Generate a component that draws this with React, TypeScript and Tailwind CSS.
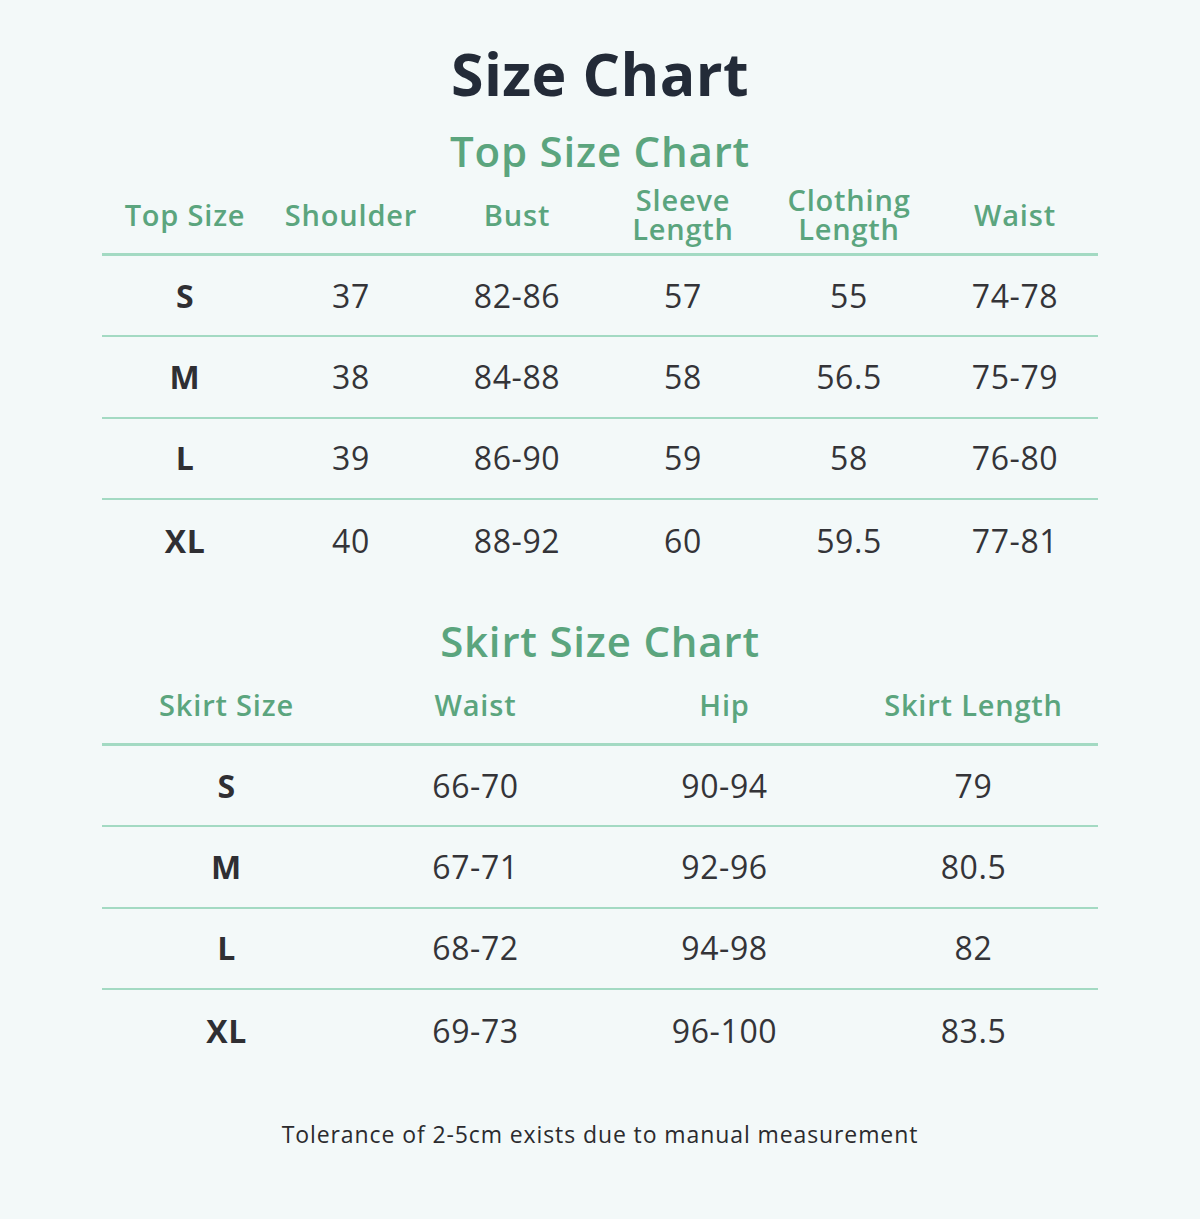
import React from 'react';

const FONT = { fontFamily: '"Open Sans", "Noto Sans", Arial, sans-serif' };

interface Table {
  title: string;
  headers: string[][];
  rows: string[][];
}

const topChart: Table = {
  title: 'Top Size Chart',
  headers: [['Top Size'], ['Shoulder'], ['Bust'], ['Sleeve', 'Length'], ['Clothing', 'Length'], ['Waist']],
  rows: [
    ['S', '37', '82-86', '57', '55', '74-78'],
    ['M', '38', '84-88', '58', '56.5', '75-79'],
    ['L', '39', '86-90', '59', '58', '76-80'],
    ['XL', '40', '88-92', '60', '59.5', '77-81'],
  ],
};

const skirtChart: Table = {
  title: 'Skirt Size Chart',
  headers: [['Skirt Size'], ['Waist'], ['Hip'], ['Skirt Length']],
  rows: [
    ['S', '66-70', '90-94', '79'],
    ['M', '67-71', '92-96', '80.5'],
    ['L', '68-72', '94-98', '82'],
    ['XL', '69-73', '96-100', '83.5'],
  ],
};

const SizeTable: React.FC<{ table: Table; cols: string }> = ({ table, cols }) => (
  <div className="w-[996px]">
    <h2 className="text-center text-[42px] leading-[52px] font-semibold text-[#5ba57e] tracking-[0.8px]">
      {table.title}
    </h2>
    {/* header */}
    <div className={`grid ${cols} h-[79px] items-center border-b-[3px] border-[#a3dac3]`}>
      {table.headers.map((h, i) => (
        <div
          key={i}
          className="pb-[2px] text-center text-[29px] leading-[29px] font-semibold text-[#5ba57e] tracking-[0.8px]"
        >
          {h.map((line) => (
            <div key={line}>{line}</div>
          ))}
        </div>
      ))}
    </div>
    {table.rows.map((row, r) => (
      <div
        key={r}
        className={`grid ${cols} h-[81.3px] items-center ${r < table.rows.length - 1 ? 'border-b-2 border-[#a3dac3]' : ''}`}
      >
        {row.map((cell, c) => (
          <div
            key={c}
            className={`text-center text-[32px] tracking-[0.6px] ${c === 0 ? 'font-bold text-[#2f2f33]' : 'font-normal text-[#343438]'}`}
          >
            {cell}
          </div>
        ))}
      </div>
    ))}
  </div>
);

const App: React.FC = () => {
  return (
    <div className="min-h-[1219px] w-full bg-[#f3f9f9] flex flex-col items-center" style={FONT}>
      <h1 className="mt-[35px] text-[59px] leading-[76px] font-bold text-[#232b38] tracking-[0.4px]">Size Chart</h1>
      <div className="mt-[14px]">
        <SizeTable table={topChart} cols="grid-cols-6" />
      </div>
      <div className="mt-[34px]">
        <SizeTable table={skirtChart} cols="grid-cols-4" />
      </div>
      <p className="mt-[47px] text-[23px] leading-[32px] text-[#2b2b2e] tracking-[0.9px]">
        Tolerance of 2-5cm exists due to manual measurement
      </p>
    </div>
  );
};

export default App;
